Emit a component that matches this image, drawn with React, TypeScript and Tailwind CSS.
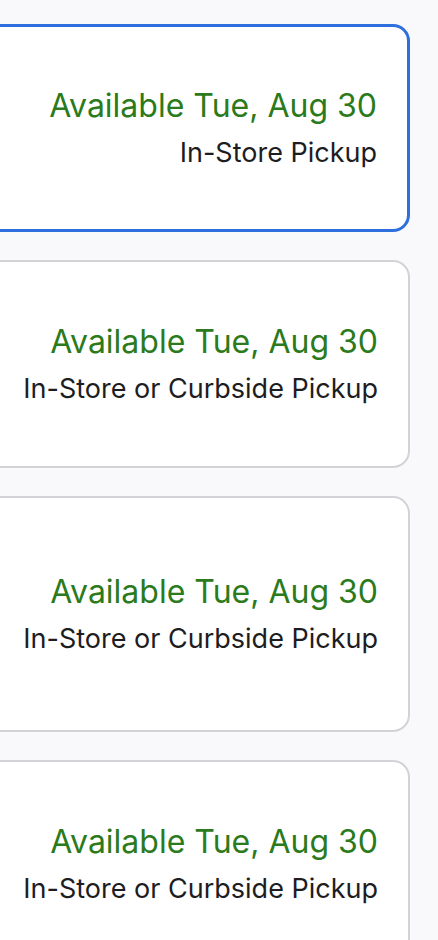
import React from "react";

const cards = [
  { sub: "In-Store Pickup", selected: true, h: "h-[208px]" },
  { sub: "In-Store or Curbside Pickup", selected: false, h: "h-[208px]" },
  { sub: "In-Store or Curbside Pickup", selected: false, h: "h-[236px]" },
  { sub: "In-Store or Curbside Pickup", selected: false, h: "h-[208px]" },
];

export default function App() {
  return (
    <div className="w-[438px] h-[940px] overflow-hidden bg-[#f9f9fb]" style={{ fontFamily: "Inter, 'Noto Sans', sans-serif" }}>
      <div className="flex flex-col gap-[28px] pt-[24px] -ml-[40px] mr-[28px]">
        {cards.map((c, i) => (
          <div
            key={i}
            className={`${c.h} shrink-0 bg-white rounded-[17px] flex flex-col items-end justify-center pr-[30px] ${
              c.selected ? "border-[3px] border-[#2f6fdd]" : "border-2 border-[#d2d2d7]"
            }`}
          >
            <div className="text-[32px] leading-[38px] text-[#2b7a1b]">Available Tue, Aug 30</div>
            <div className="mt-[12px] text-[27px] leading-[32px] text-[#1d1d1f]">{c.sub}</div>
          </div>
        ))}
      </div>
    </div>
  );
}
